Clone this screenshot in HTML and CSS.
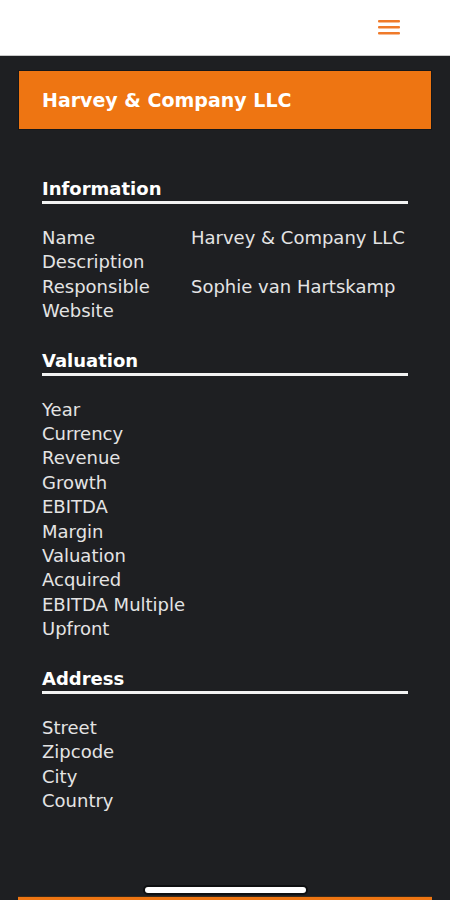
FILE: index.html
```html
<!DOCTYPE html>
<html lang="en">
<head>
    <meta charset="UTF-8">
    <meta name="viewport" content="width=device-width, initial-scale=1.0">
    <title>Harvey &amp; Company LLC</title>
    <link rel="stylesheet" href="styles.css">
</head>
<body>
    <header class="topbar">
        <button class="menu-btn" aria-label="Menu">
            <svg width="22" height="18" viewBox="0 0 22 18">
                <rect x="0" y="2" width="22" height="2.6" rx="1" fill="#ef7a2a"/>
                <rect x="0" y="8" width="22" height="2.6" rx="1" fill="#ef7a2a"/>
                <rect x="0" y="14" width="22" height="2.6" rx="1" fill="#ef7a2a"/>
            </svg>
        </button>
    </header>

    <main class="page">
        <div class="title-card">Harvey &amp; Company LLC</div>

        <div class="details">
            <section class="section">
                <h2>Information</h2>
                <dl class="rows">
                    <dt>Name</dt><dd>Harvey &amp; Company LLC</dd>
                    <dt>Description</dt><dd></dd>
                    <dt>Responsible</dt><dd>Sophie van Hartskamp</dd>
                    <dt>Website</dt><dd></dd>
                </dl>
            </section>

            <section class="section">
                <h2>Valuation</h2>
                <dl class="rows">
                    <dt>Year</dt><dd></dd>
                    <dt>Currency</dt><dd></dd>
                    <dt>Revenue</dt><dd></dd>
                    <dt>Growth</dt><dd></dd>
                    <dt>EBITDA</dt><dd></dd>
                    <dt>Margin</dt><dd></dd>
                    <dt>Valuation</dt><dd></dd>
                    <dt>Acquired</dt><dd></dd>
                    <dt>EBITDA Multiple</dt><dd></dd>
                    <dt>Upfront</dt><dd></dd>
                </dl>
            </section>

            <section class="section">
                <h2>Address</h2>
                <dl class="rows">
                    <dt>Street</dt><dd></dd>
                    <dt>Zipcode</dt><dd></dd>
                    <dt>City</dt><dd></dd>
                    <dt>Country</dt><dd></dd>
                </dl>
            </section>
        </div>

        <div class="footer-card"></div>
    </main>

    <!-- home indicator -->
    <div class="home-indicator"></div>
</body>
</html>
```

FILE: styles.css
```css
body {
    margin: 0;
    font-family: "DejaVu Sans", Verdana, sans-serif;
    background: #1e1f22;
}

.topbar {
    height: 55px;
    background: #fff;
    border-bottom: 1px solid #c9c9c9;
    display: flex;
    align-items: center;
    justify-content: flex-end;
    padding-right: 50px;
}

.menu-btn {
    background: none;
    border: none;
    padding: 0;
    display: flex;
    margin-top: -1px;
}

.page {
    padding: 14px 18px 0;
    height: 844px;
    box-sizing: border-box;
    overflow: hidden;
}

.title-card {
    background: #ee7512;
    color: #fff;
    height: 60px;
    display: flex;
    align-items: center;
    padding-left: 23px;
    font-size: 19px;
    font-weight: bold;
    border: 1px solid #15171a;
    box-sizing: border-box;
}

.details {
    padding: 0 24px;
    color: #e4e4e4;
}

.section {
    margin-top: 49px;
}

.section + .section {
    margin-top: 27px;
}

.section h2 {
    margin: 0;
    font-size: 18px;
    line-height: 20px;
    font-weight: bold;
    color: #fff;
    padding-bottom: 2px;
    border-bottom: 3px solid #f2f2f2;
}

.rows {
    margin: 22px 0 0;
    display: grid;
    grid-template-columns: 149px 1fr;
    font-size: 18px;
    line-height: 24.4px;
}

.rows dt,
.rows dd {
    margin: 0;
    white-space: nowrap;
}

.footer-card {
    margin-top: 83px;
    height: 20px;
    background: #ee7512;
    border-top: 1px solid #3a2a1a;
}

.home-indicator {
    position: fixed;
    left: 145px;
    bottom: 7px;
    width: 161px;
    height: 6px;
    border-radius: 3px;
    background: #fff;
    box-shadow: 0 0 0 2px #0e0f11;
}
```
